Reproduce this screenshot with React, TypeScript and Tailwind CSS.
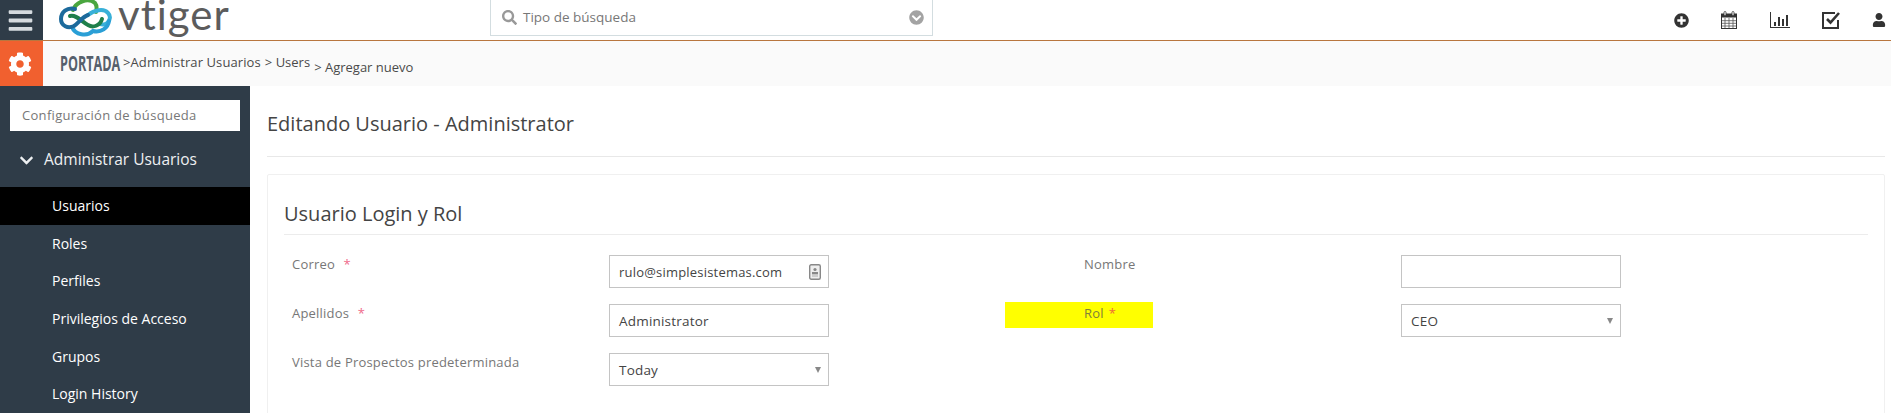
import React from 'react';
import { FaBars, FaCog, FaSearch, FaChevronCircleDown, FaChevronDown, FaPlusCircle, FaUser } from 'react-icons/fa';

const sideItems = ['Usuarios', 'Roles', 'Perfiles', 'Privilegios de Acceso', 'Grupos', 'Login History'];

const Req = ({ className = 'text-[#ef6a8a]' }: { className?: string }) => <span className={`ml-[5px] ${className}`}>*</span>;

const Field: React.FC<{ children?: React.ReactNode; arrow?: boolean; icon?: boolean }> = ({ children, arrow, icon }) => (
  <div className="flex h-[33px] w-[220px] items-center justify-between border border-[#c4c4c4] pl-[9px] pr-[7px] text-[13.5px] text-[#444]">
    <span className="pt-[2px]">{children}</span>
    {arrow && <span className="h-0 w-0 border-x-[3.5px] border-t-[6px] border-x-transparent border-t-[#888]" />}
    {icon && (
      <svg width="12" height="16" viewBox="0 0 12 16">
        <rect x="0.7" y="0.7" width="10.6" height="14.6" rx="1.5" fill="#eee" stroke="#888" strokeWidth="1.4" />
        <circle cx="6" cy="5.5" r="1.6" fill="#888" />
        <rect x="3" y="8" width="6" height="2.4" fill="#888" />
        <rect x="3" y="11.5" width="6" height="1" fill="#aaa" />
      </svg>
    )}
  </div>
);

const Logo = () => (
  <svg width="54" height="40" viewBox="0 0 54 40" fill="none" strokeWidth="4" strokeLinecap="round">
    <path d="M15 10C18 2 30 -3 37 3C40 7 38 10 38 12" stroke="#4aa63f" />
    <path d="M30 15C36 10 46 8 50 13C53 16 52 20 50 22C48 25 44 25 42 24" stroke="#38b0d8" />
    <path d="M12 16C18 14 24 22 30 25C35 28 42 26 44 19" stroke="#1f7f4a" />
    <path d="M14 27C17 35 29 37 35 31C43 33 50 28 51 21" stroke="#2a9fd6" />
    <path d="M17 9C9 7 3 12 3 19C3 26 10 29 16 26C21 23 24 17 30 15" stroke="#1c6a9c" />
  </svg>
);

const Calendar = () => (
  <svg width="16" height="18" viewBox="0 0 16 18" fill="none">
    <rect x="0.5" y="3" width="15" height="14.5" fill="#fff" stroke="#333" />
    <rect x="0.5" y="3" width="15" height="3.5" fill="#333" />
    <path d="M4 7v10M8 7v10M12 7v10M1 9.7h14M1 12.3h14M1 15h14" stroke="#555" strokeWidth="0.8" />
    <rect x="3" y="0.5" width="2" height="4" rx="1" fill="#fff" stroke="#333" strokeWidth="0.8" />
    <rect x="11" y="0.5" width="2" height="4" rx="1" fill="#fff" stroke="#333" strokeWidth="0.8" />
  </svg>
);

const Chart = () => (
  <svg width="20" height="16" viewBox="0 0 20 16" fill="#333">
    <rect x="0" y="0" width="1" height="16" />
    <rect x="0" y="15" width="20" height="1" />
    <rect x="4" y="10" width="2" height="4" />
    <rect x="8" y="5" width="2" height="9" />
    <rect x="12" y="7" width="2" height="7" />
    <rect x="16" y="3" width="2" height="11" />
  </svg>
);

const CheckBox = () => (
  <svg width="19" height="18" viewBox="0 0 19 18" fill="none">
    <path d="M13 2H1v15h15V9" stroke="#333" strokeWidth="2" />
    <path d="M5 8l3.5 3.5L17 2" stroke="#333" strokeWidth="2.6" />
  </svg>
);

export default function App() {
  return (
    <div className="h-[413px] w-[1891px] overflow-hidden bg-white font-['Open_Sans',sans-serif] text-[#333]">
      <div className="flex h-[41px] border-b border-[#b8763f]">
        <div className="flex w-[43px] items-center justify-center bg-[#2f3c48] pr-[3px] text-[#d6dbe0]">
          <FaBars size={27} />
        </div>
        <div className="ml-[15px] flex w-[432px]">
          <Logo />
          <span className="ml-[6px] h-[28px] font-['Lato',sans-serif] text-[42px] leading-[28px] tracking-[1px] text-[#5c5c5c]">vtiger</span>
        </div>
        <div className="flex h-[36px] w-[443px] items-center border-x border-b border-[#d3dde0] pl-[11px] pr-[8px]">
          <FaSearch size={15} className="text-[#999]" />
          <span className="ml-[6px] flex-1 text-[13.5px] text-[#777]">Tipo de búsqueda</span>
          <FaChevronCircleDown size={15} className="text-[#a3a3a3]" />
        </div>
        <div className="ml-auto flex items-center">
          <FaPlusCircle size={15} className="text-[#333]" />
          <div className="ml-[32px]"><Calendar /></div>
          <div className="ml-[33px]"><Chart /></div>
          <div className="ml-[32px]"><CheckBox /></div>
          <FaUser size={14} className="ml-[31px] mr-[5px] text-[#333]" />
        </div>
      </div>

      <div className="flex h-[45px] bg-[#fafafa]">
        <div className="flex w-[43px] items-center justify-center bg-[#f1602f] pr-[3px] text-white">
          <FaCog size={24} />
        </div>
        <div className="ml-[17px] flex items-center text-[13px] text-[#4a4a4a]">
          <span className="inline-block w-[58px] origin-left scale-x-[0.6] whitespace-nowrap text-[21px] font-bold text-[#56606c]">PORTADA</span>
          <span className="ml-[5px] mt-[-2px] tracking-[0.1px]">&gt;Administrar Usuarios</span>
          <span className="ml-[4px] mt-[-2px]">&gt; Users</span>
          <span className="ml-[4px] mt-[9px]">&gt; Agregar nuevo</span>
        </div>
      </div>

      <div className="flex">
        <aside className="h-[327px] w-[250px] shrink-0 bg-[#2f3c48] pt-[14px] text-white">
          <div className="mx-[10px] flex h-[31px] items-center bg-white pl-[12px] text-[13px] tracking-[0.3px] text-[#777]">Configuración de búsqueda</div>
          <div className="flex h-[56px] items-center pl-[19px] pt-[2px] text-[15.5px] text-[#eef0f2]">
            <FaChevronDown size={15} />
            <span className="ml-[10px]">Administrar Usuarios</span>
          </div>
          {sideItems.map((item, i) => (
            <div key={item} className={`flex h-[37.6px] items-center pl-[52px] text-[14px] ${i === 0 ? 'bg-black' : ''}`}>{item}</div>
          ))}
        </aside>

        <main className="min-w-0 flex-1 pl-[17px] pr-[6px]">
          <div className="flex h-[71px] items-center border-b border-[#e8e8e8] pt-[6px] text-[20px] text-[#444]">Editando Usuario - Administrator</div>
          <div className="mt-[17px] h-[300px] rounded-[2px] border border-[#f0f0f0] px-[16px] pt-[22px]">
            <div className="border-b border-[#ececec] pb-[4px] text-[20px] leading-[33px] text-[#444]">Usuario Login y Rol</div>
            <div className="mt-[20px] grid grid-cols-[317px_475px_317px_220px] gap-y-[16px] pl-[8px] text-[13px] tracking-[0.2px] text-[#777]">
              <div>Correo <Req /></div>
              <Field icon><span className="text-[13px]">rulo@simplesistemas.com</span></Field>
              <div>Nombre</div>
              <Field />

              <div>Apellidos <Req /></div>
              <Field>Administrator</Field>
              <div className="relative">
                <div className="absolute left-[-79px] top-[-2px] h-[26px] w-[148px] bg-[#ffff00]" />
                <span className="relative text-[#80803a]">Rol</span>
                <Req className="relative text-[#ef6a3a]" />
              </div>
              <Field arrow>CEO</Field>

              <div>Vista de Prospectos predeterminada</div>
              <Field arrow>Today</Field>
            </div>
          </div>
        </main>
      </div>
    </div>
  );
}
